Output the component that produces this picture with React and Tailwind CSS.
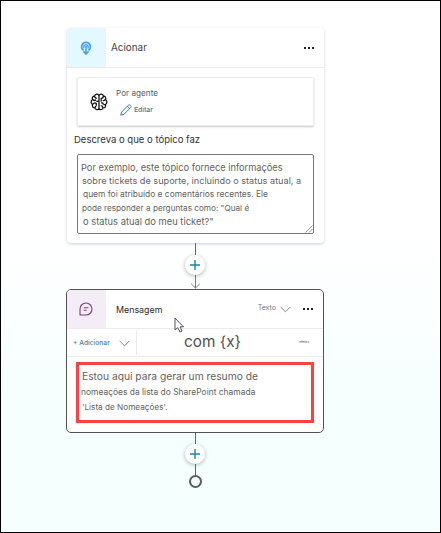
const sans = "font-['Inter','Liberation_Sans',sans-serif]";

function Dots() {
  return (
    <div className="flex gap-[2px]">
      <span className="size-[2px] bg-[#222]" />
      <span className="size-[2px] bg-[#222]" />
      <span className="size-[2px] bg-[#222]" />
    </div>
  );
}

function Chevron() {
  return (
    <svg width="11" height="7" viewBox="0 0 11 7" fill="none" stroke="#757575" strokeWidth="0.9" className="shrink-0">
      <path d="M.7 1 5.5 5.8 10.3 1" />
    </svg>
  );
}

function AddButton() {
  return (
    <button className="flex size-5 shrink-0 items-center justify-center rounded-full bg-white shadow-[0_1px_4px_rgba(0,0,0,0.3)]">
      <svg width="10" height="10" viewBox="0 0 10 10" stroke="#1686a8" strokeWidth="1.4">
        <path d="M5 0v10M0 5h10" />
      </svg>
    </button>
  );
}

function TriggerIcon() {
  return (
    <svg width="12" height="14" viewBox="0 0 12 14" fill="none" stroke="#3d9df3">
      <path d="M3.600 9.400A4.400 4.400 0 1 1 8.400 9.400" strokeWidth="1.700" />
      <path d="M4 7.400A2.300 2.300 0 1 1 8 7.400" strokeWidth="1.3" />
      <path d="M6 5v8M3.400 10.400 6 13 8.600 10.400" strokeWidth="1.500" />
    </svg>
  );
}

function BrainIcon() {
  return (
    <svg width="18" height="18" viewBox="0 0 18 18" fill="none" stroke="#141414" strokeWidth="1.3" strokeLinejoin="round">
      <path d="M9 2.4C8 .5 5 .8 4.6 3 2.600 3 1.700 5 2.600 6.500 .6 7.500 .6 10.500 2.600 11.500 1.800 13.600 3.200 15 4.900 14.900 5.600 17 8.200 17.200 9 15.500 9.800 17.200 12.400 17 13.100 14.900 14.800 15 16.200 13.600 15.400 11.500 17.400 10.500 17.400 7.500 15.400 6.500 16.300 5 15.400 3 13.400 3 13 .8 10 .5 9 2.400Z" />
      <path d="M9 2.400v13.100M4.600 3c0 1.500 1 2.300 2.300 2.200M2.600 6.500c1.200 1.200 2.600 1 3.400.2M2.600 11.500c.6-1.600 2.500-2 3.700-1.100v2.300M6.300 8.300H9M13.400 3c0 1.600-.8 2.400-2.200 2.400v3M15.400 6.500c-.8 1-1.700 1.300-2.700 1M15.400 11.500c-1.500.3-2.500-.4-2.700-1.700H11M13.100 14.900c-.2-1.400-1-2.200-2.300-2.300M4.900 14.900c0-1 .5-1.500 1.400-1.800" />
    </svg>
  );
}

function PencilIcon() {
  return (
    <svg width="12" height="12" viewBox="0 0 12 12" fill="none" stroke="#1f86a6" strokeWidth="1" strokeLinejoin="round">
      <path d="M.8 11.200 1.600 8 8.300 1.300C9.700 0 12 2.100 10.700 3.600L4 10.300ZM7.300 2.300 9.700 4.700" />
    </svg>
  );
}

function MessageIcon() {
  return (
    <svg width="14" height="14" viewBox="0 0 14 14" fill="none" stroke="#7d3c84" strokeWidth="1.1">
      <path d="M1 13V7a6 6 0 1 1 6 6Z" strokeLinejoin="round" />
      <path d="M4.700 5.800h4.800M4.700 8.200h3" />
    </svg>
  );
}

function TriggerCard() {
  return (
    <section className="ml-px flex h-[215px] w-[257px] flex-col rounded-[4px] bg-white shadow-[0_1px_3px_rgba(80,120,150,0.32)]">
      <header className="flex h-10 shrink-0 items-center border-b border-[#ebebeb]">
        <div className="flex h-full w-[39px] items-center justify-center rounded-tl-[4px] bg-[#e4f9ff] pr-px">
          <TriggerIcon />
        </div>
        <h2 className="-mt-px ml-[5px] text-[9.900px] leading-4 text-[#424242]">Acionar</h2>
        <div className="mr-[10px] ml-auto">
          <Dots />
        </div>
      </header>
      <div className="mx-[10px] mt-[9px] flex h-[49px] shrink-0 items-center rounded-[2px] border border-[#ededed] pl-[12px] shadow-[0_1px_2px_rgba(0,0,0,0.22)]">
        <BrainIcon />
        <div className="mt-[2px] ml-[8px] flex flex-col">
          <span className="text-[8.2px] leading-[14px] text-[#5e5e5e]">Por agente</span>
          <a className="ml-[4px] flex h-[19px] items-center gap-[2px] text-[6.800px] font-medium text-[#237f9d]">
            <PencilIcon />
            <span className="mt-[2px]">Editar</span>
          </a>
        </div>
      </div>
      <h3 className="mt-[7px] ml-[7px] text-[9.520px] leading-[14px] whitespace-nowrap text-[#333]">Descreva o que o tópico faz</h3>
      <div className="relative mx-[10px] mt-[7px] h-[80px] shrink-0 rounded-[2px] border border-[#777] pt-[6px] pl-[3px] whitespace-nowrap text-[#625f5c]">
        <p className="text-[9.250px] leading-[13px]">Por exemplo, este tópico fornece informações</p>
        <p className="pl-px text-[9.150px] leading-[13px]">sobre tickets de suporte, incluindo o status atual, a</p>
        <p className="pl-[2px] text-[8.420px] leading-[14px]">quem foi atribuído e comentários recentes. Ele</p>
        <p className="pl-px text-[8.200px] leading-[14px]">pode responder a perguntas como: "Qual é</p>
        <p className="pl-[2px] text-[9.350px] leading-[13px]">o status atual do meu ticket?"</p>
        <svg className="absolute right-0 bottom-0" width="8" height="8" viewBox="0 0 8 8" stroke="#777" strokeWidth="0.8">
          <path d="M.5 7.500 7.500 .5M4 7.500 7.500 4" />
        </svg>
      </div>
    </section>
  );
}

function MessageCard() {
  return (
    <section className="flex h-[144px] w-[258px] flex-col rounded-[5px] border border-[#525252] bg-white">
      <header className="relative flex h-[39px] shrink-0 items-center border-b border-[#ebebeb]">
        <div className="flex h-full w-[39px] items-center justify-center rounded-tl-[4px] bg-[#f4ecf7] pr-px">
          <MessageIcon />
        </div>
        <h2 className="mt-[2px] ml-[10px] text-[8.900px] leading-4 text-[#2b2b2b]">Mensagem</h2>
        <svg className="absolute top-[27px] left-[107px]" width="11" height="16" viewBox="0 0 11 16" fill="#fff" stroke="#3c3c4c" strokeWidth="0.9">
          <path d="M1 1V13L3.700 10.600 6 15 8 14 6 9.800H9.500Z" />
        </svg>
        <div className="mr-[10px] ml-auto flex items-center">
          <span className="-mt-[2px] text-[7px] leading-3 text-[#777]">Texto</span>
          <div className="mr-[12px] ml-[4px]">
            <Chevron />
          </div>
          <Dots />
        </div>
      </header>
      <div className="flex h-[28px] shrink-0 items-center border-b border-[#ebebeb]">
        <div className="flex h-[24px] w-[70px] items-center border-r border-[#e8e8e8] pl-[6px]">
          <span className="mt-px text-[6.700px] font-medium whitespace-nowrap text-[#3f849b]">+ Adicionar</span>
          <div className="mt-px ml-[9px]">
            <Chevron />
          </div>
        </div>
        <span className="-mt-px ml-[47px] text-[15.300px] leading-5 whitespace-nowrap text-[#505050]">com {"{x}"}</span>
        <span className="mr-[14px] ml-auto text-[3px] leading-none text-[#444]">efeitos</span>
      </div>
      <div className="mx-[9px] mt-[5px] h-[61px] shrink-0 border-[3px] border-[#fb4141] pt-[3px] pl-[3px] whitespace-nowrap text-[#625f5c]">
        <p className="text-[10.250px] leading-[16px]">Estou aqui para gerar um resumo de</p>
        <p className="mt-px -ml-px text-[8.450px] leading-[15px]">nomeações da lista do SharePoint chamada</p>
        <p className="text-[8.200px] leading-[15px]">'Lista de Nomeações'.</p>
      </div>
    </section>
  );
}

export default function App() {
  return (
    <main className={`${sans} flex h-[533px] w-[441px] flex-col items-start border border-black bg-linear-to-b from-white from-45% to-[#f4fffe] to-80% pt-[27px] pl-[65px]`}>
      <TriggerCard />
      <div className="flex h-[46px] w-[258px] flex-col items-center">
        <div className="h-3 w-px shrink-0 bg-[#666]" />
        <AddButton />
        <svg width="11" height="14" viewBox="0 0 11 14" fill="none" stroke="#777" className="shrink-0">
          <path d="M5.500 0V13M1.200 8.800 5.500 13 9.800 8.800" />
        </svg>
      </div>
      <MessageCard />
      <div className="flex w-[258px] flex-col items-center">
        <div className="h-[11px] w-px bg-[#666]" />
        <AddButton />
        <div className="h-[11px] w-px bg-[#666]" />
        <div className="size-[13px] rounded-full border-2 border-[#5b5b5b]" />
      </div>
    </main>
  );
}
